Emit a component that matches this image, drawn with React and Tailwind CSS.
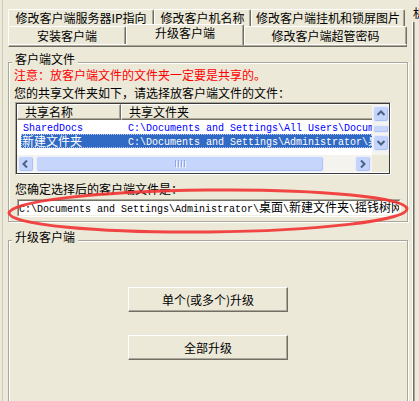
import React from 'react';

const FACE = "font-['Noto_Sans_CJK_SC',sans-serif] text-[12px] leading-[14px]";

// ascii runs in a 6px-per-char mono face, CJK runs at 12px (like SimSun)
function MixText({ text, className = '' }) {
  const parts = text.match(/[\x00-\x7f]+|[^\x00-\x7f]+/g) || [];
  return (
    <span className={`whitespace-pre ${className}`}>
      {parts.map((p, i) =>
        /^[\x00-\x7f]/.test(p) ? (
          <span key={i} className="font-['Liberation_Mono',monospace] text-[10px]">{p}</span>
        ) : (
          <span key={i} className="font-['Noto_Sans_CJK_SC',sans-serif] text-[12px]">{p}</span>
        )
      )}
    </span>
  );
}

function Tab({ w, selected, children }) {
  if (selected) {
    return (
      <div className={`${w} relative z-10 -mt-[2px] h-[21px] pt-[1px] flex justify-center bg-[#ECE9D8] border-t border-l border-white border-r border-r-[#716F64] rounded-t-[2px] shadow-[inset_-1px_0_0_#ACA899]`}>
        {children}
      </div>
    );
  }
  return (
    <div className={`${w} h-full flex items-center justify-center border-t border-l border-white border-r border-r-[#716F64] rounded-t-[2px] shadow-[inset_-1px_0_0_#ACA899]`}>
      {children}
    </div>
  );
}

function Chevron({ dir }) {
  const d = {
    up: 'M1.5 6 L5 2.5 L8.5 6',
    down: 'M1.5 3 L5 6.5 L8.5 3',
    left: 'M6 1.5 L2.5 5 L6 8.5',
    right: 'M3 1.5 L6.5 5 L3 8.5',
  }[dir];
  return (
    <svg width="10" height="10" viewBox="0 0 10 10">
      <path d={d} fill="none" stroke="#4D6185" strokeWidth="2" />
    </svg>
  );
}

function ArrowBtn({ dir, className = '' }) {
  return (
    <div className={`w-[16px] h-[16px] rounded-[3px] border border-[#E8EEFD] bg-[#C4D4FC] shadow-[inset_-1px_-1px_0_#AEC0EE] flex items-center justify-center ${className}`}>
      <Chevron dir={dir} />
    </div>
  );
}

function Group({ title, className = '', children }) {
  return (
    <div className={`relative ml-[5px] w-[400px] border border-[#ACA899] shadow-[1px_1px_0_#fff,inset_1px_1px_0_#fff] ${className}`}>
      <div className={`absolute left-[3px] top-[-11px] px-[3px] bg-[#ECE9D8] ${FACE}`}>{title}</div>
      {children}
    </div>
  );
}

function XPButton({ children, className = '' }) {
  return (
    <div className={`ml-[119px] w-[160px] h-[25px] flex items-center justify-center border border-t-white border-l-white border-r-[#716F64] border-b-[#716F64] shadow-[inset_-1px_-1px_0_#ACA899] ${FACE} ${className}`}>
      {children}
    </div>
  );
}

export default function App() {
  return (
    <div className={`relative w-[419px] h-[401px] overflow-hidden bg-[#ECE9D8] text-black flex ${FACE}`}>
      {/* main form */}
      <div className="ml-[2px] w-[410px] h-full border-l border-[#CFCCBD]">
        {/* tab strip */}
        <div className="pt-[9px] pl-[5px]">
          <div className="flex h-[17px]">
            <Tab w="w-[146px]">修改客户端服务器IP指向</Tab>
            <Tab w="w-[97px]">修改客户机名称</Tab>
            <Tab w="w-[154px]">修改客户端挂机和锁屏图片</Tab>
          </div>
          <div className="flex h-[18px]">
            <Tab w="w-[118px]">安装客户端</Tab>
            <Tab w="w-[118px]" selected>升级客户端</Tab>
            <Tab w="w-[163px]">修改客户端超管密码</Tab>
          </div>
          <div className="w-[399px] h-[3px] bg-[#ACA899] border-t border-l border-white border-r border-r-[#716F64] border-b border-b-[#716F64]" />
        </div>

        {/* 客户端文件 */}
        <Group title="客户端文件" className="mt-[15px] h-[160px]">
          <div className="pt-[5px]">
            <div className="ml-[5px] text-[#FF0000]">注意：放客户端文件的文件夹一定要是共享的。</div>
            <div className="ml-[5px] mt-[4px]">您的共享文件夹如下，请选择放客户端文件的文件：</div>

            {/* list view */}
            <div className="ml-[6px] mt-[2px] w-[376px] h-[73px] border border-t-[#ACA899] border-l-[#ACA899] border-r-white border-b-white">
              <div className="h-full border border-[#3A3A3A] bg-white flex flex-col">
                <div className="flex h-[51px]">
                  <div className="w-[355px] overflow-hidden">
                    <div className="flex h-[16px]">
                      <div className="w-[104px] shrink-0 pl-[7px] flex items-center border-t border-l border-white border-r border-b border-r-[#716F64] border-b-[#716F64] bg-[#ECE9D8] shadow-[inset_-1px_-1px_0_#ACA899]">共享名称</div>
                      <div className="flex-1 pl-[7px] flex items-center border-t border-l border-white border-b border-b-[#716F64] bg-[#ECE9D8] shadow-[inset_0_-1px_0_#ACA899]">共享文件夹</div>
                    </div>
                    <div className="pl-[4px]">
                      <div className="flex h-[14px] items-center text-[#0000FF]">
                        <div className="w-[100px] shrink-0 pl-[2px]"><MixText text="SharedDocs" /></div>
                        <div className="flex-1 pl-[7px] overflow-hidden"><MixText text="C:\Documents and Settings\All Users\Documents" /></div>
                      </div>
                      <div className="flex h-[14px] items-center bg-[#316AC5] text-white outline-1 outline-dotted outline-[#B8C8F0] -outline-offset-1">
                        <div className="w-[100px] shrink-0 pl-[1px]"><MixText text="新建文件夹" /></div>
                        <div className="flex-1 pl-[7px] overflow-hidden"><MixText text="C:\Documents and Settings\Administrator\桌面\新建文件夹" /></div>
                      </div>
                    </div>
                  </div>
                  {/* vertical scrollbar */}
                  <div className="w-[17px] bg-[#F4F3EE] flex flex-col items-center">
                    <ArrowBtn dir="up" className="mt-[2px]" />
                    <div className="mt-[3px] w-[16px] h-[8px] rounded-[2px] border border-[#E8EEFD] bg-[#C8D6FB] shadow-[inset_-1px_-1px_0_#B0C2F0]" />
                    <ArrowBtn dir="down" className="mt-auto mb-[4px]" />
                  </div>
                </div>
                {/* horizontal scrollbar */}
                <div className="flex h-[17px]">
                  <div className="w-[355px] flex items-center bg-[#F4F3EE]">
                    <ArrowBtn dir="left" className="ml-[1px]" />
                    <div className="ml-[2px] w-[288px] h-[16px] rounded-[3px] border border-[#E8EEFD] bg-[#C6D5FC] shadow-[inset_-1px_-1px_0_#B0C2F0] flex items-center justify-center gap-[1px]">
                      <div className="w-[1px] h-[7px] bg-[#8FA8E8] shadow-[1px_1px_0_#EEF3FF]" />
                      <div className="w-[1px] h-[7px] bg-[#8FA8E8] shadow-[1px_1px_0_#EEF3FF] ml-[1px]" />
                      <div className="w-[1px] h-[7px] bg-[#8FA8E8] shadow-[1px_1px_0_#EEF3FF] ml-[1px]" />
                      <div className="w-[1px] h-[7px] bg-[#8FA8E8] shadow-[1px_1px_0_#EEF3FF] ml-[1px]" />
                    </div>
                    <ArrowBtn dir="right" className="ml-auto mr-[1px]" />
                  </div>
                  <div className="w-[17px] bg-[#ECE9D8]" />
                </div>
              </div>
            </div>

            <div className="ml-[6px] mt-[7px]">您确定选择后的客户端文件是：</div>

            {/* path field */}
            <div className="ml-[8px] mt-[3px] w-[384px] h-[18px] border border-t-[#ACA899] border-l-[#ACA899] border-r-white border-b-white">
              <div className="h-full border border-t-[#716F64] border-l-[#716F64] border-r-[#F1EFE2] border-b-[#F1EFE2] bg-white flex items-center overflow-hidden">
                <MixText text="C:\Documents and Settings\Administrator\桌面\新建文件夹\摇钱树网吧客户端" />
              </div>
            </div>
          </div>
        </Group>

        {/* 升级客户端 */}
        <Group title="升级客户端" className="mt-[18px] h-[200px]">
          <div className="pt-[46px]">
            <XPButton>单个(或多个)升级</XPButton>
            <XPButton className="mt-[23px]">全部升级</XPButton>
          </div>
        </Group>
      </div>

      {/* clipped neighbour panel on the right */}
      <div className="flex-1 overflow-hidden">
        <div className="pl-[1px] pt-[6px] h-[22px] whitespace-nowrap">机器</div>
        <div className="h-full border-l border-white">
          <div className="h-full border-l border-[#716F64] shadow-[inset_1px_0_0_#ACA899]" />
        </div>
      </div>

      {/* red hand-drawn mark */}
      <svg className="absolute left-0 top-0 pointer-events-none" width="419" height="401" viewBox="0 0 419 401">
        <ellipse cx="208" cy="211" rx="199" ry="21" fill="none" stroke="#F23333" strokeWidth="3" strokeOpacity="0.9" transform="rotate(-0.6 208 211)" />
      </svg>
    </div>
  );
}
